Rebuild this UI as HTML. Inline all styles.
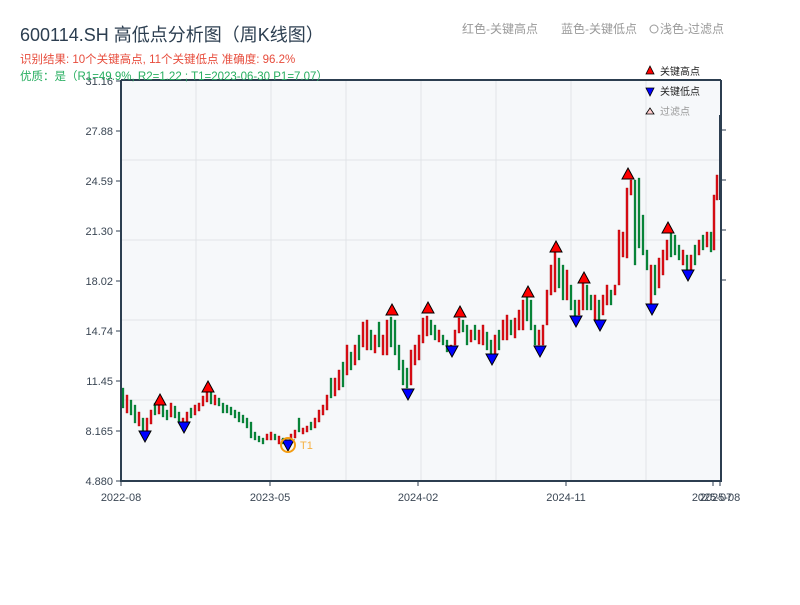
<!DOCTYPE html>
<html><head><meta charset="utf-8"><style>
body{margin:0;background:#fff;width:800px;height:600px;overflow:hidden;font-family:"Liberation Sans","Noto Sans CJK SC",sans-serif}
svg text{font-family:"Liberation Sans","Noto Sans CJK SC",sans-serif}
.r{fill:#e0101a;stroke:#a00;stroke-width:0.4}
.g{fill:#0a8a3a;stroke:#063;stroke-width:0.3}
.H{fill:red;stroke:#000;stroke-width:1}
.L{fill:blue;stroke:#000;stroke-width:1}
</style></head><body>
<svg width="800" height="600" xmlns="http://www.w3.org/2000/svg">
<rect x="121" y="81" width="600" height="400" fill="#f6f8fa"/>
<g stroke="#e1e4e8" stroke-width="1">
<line x1="196" y1="81" x2="196" y2="481"/><line x1="271" y1="81" x2="271" y2="481"/><line x1="346" y1="81" x2="346" y2="481"/><line x1="421" y1="81" x2="421" y2="481"/><line x1="496" y1="81" x2="496" y2="481"/><line x1="571" y1="81" x2="571" y2="481"/><line x1="646" y1="81" x2="646" y2="481"/>
<line x1="121" y1="160" x2="721" y2="160"/><line x1="121" y1="240" x2="721" y2="240"/><line x1="121" y1="320" x2="721" y2="320"/><line x1="121" y1="400" x2="721" y2="400"/>
</g>
<g>
<rect class="g" x="122" y="388" width="2" height="20"/><rect class="r" x="126" y="395" width="2" height="18"/><rect class="g" x="130" y="400" width="2" height="15"/><rect class="g" x="134" y="405" width="2" height="18"/><rect class="r" x="138" y="412" width="2" height="14"/><rect class="g" x="142" y="418" width="2" height="14"/>
<rect class="r" x="146" y="418" width="2" height="16"/><rect class="r" x="150" y="410" width="2" height="14"/><rect class="g" x="154" y="403" width="2" height="12"/><rect class="r" x="158" y="400" width="2" height="14"/>
<rect class="g" x="162" y="405" width="2" height="12"/><rect class="g" x="166" y="410" width="2" height="10"/><rect class="r" x="170" y="403" width="2" height="14"/><rect class="g" x="174" y="406" width="2" height="12"/><rect class="g" x="178" y="412" width="2" height="10"/><rect class="r" x="182" y="418" width="2" height="10"/>
<rect class="r" x="186" y="412" width="2" height="10"/><rect class="g" x="190" y="408" width="2" height="10"/><rect class="r" x="194" y="405" width="2" height="10"/><rect class="r" x="198" y="403" width="2" height="8"/><rect class="r" x="202" y="396" width="2" height="10"/><rect class="r" x="206" y="388" width="2" height="14"/>
<rect class="g" x="210" y="392" width="2" height="12"/><rect class="r" x="214" y="395" width="2" height="10"/><rect class="g" x="218" y="398" width="2" height="8"/><rect class="g" x="222" y="403" width="2" height="10"/><rect class="g" x="226" y="405" width="2" height="8"/><rect class="g" x="230" y="407" width="2" height="8"/><rect class="g" x="234" y="410" width="2" height="8"/><rect class="g" x="238" y="412" width="2" height="10"/><rect class="g" x="242" y="415" width="2" height="8"/><rect class="g" x="246" y="418" width="2" height="10"/><rect class="g" x="250" y="422" width="2" height="16"/><rect class="g" x="254" y="432" width="2" height="8"/><rect class="g" x="258" y="436" width="2" height="6"/><rect class="g" x="262" y="438" width="2" height="6"/>
<rect class="r" x="266" y="434" width="2" height="6"/><rect class="r" x="270" y="432" width="2" height="8"/><rect class="g" x="274" y="434" width="2" height="6"/><rect class="r" x="278" y="436" width="2" height="8"/><rect class="g" x="282" y="438" width="2" height="6"/><rect class="r" x="286" y="440" width="2" height="6"/>
<rect class="r" x="290" y="434" width="2" height="10"/><rect class="r" x="294" y="430" width="2" height="8"/><rect class="g" x="298" y="418" width="2" height="14"/><rect class="r" x="302" y="428" width="2" height="6"/><rect class="r" x="306" y="426" width="2" height="6"/><rect class="g" x="310" y="422" width="2" height="8"/><rect class="r" x="314" y="418" width="2" height="10"/><rect class="r" x="318" y="410" width="2" height="12"/><rect class="r" x="322" y="405" width="2" height="10"/><rect class="r" x="326" y="395" width="2" height="15"/><rect class="g" x="330" y="378" width="2" height="20"/>
<rect class="r" x="334" y="378" width="2" height="18"/><rect class="r" x="338" y="370" width="2" height="20"/><rect class="g" x="342" y="362" width="2" height="25"/><rect class="r" x="346" y="345" width="2" height="30"/><rect class="g" x="350" y="352" width="2" height="18"/><rect class="r" x="354" y="345" width="2" height="20"/><rect class="g" x="358" y="335" width="2" height="25"/><rect class="r" x="362" y="322" width="2" height="25"/><rect class="r" x="366" y="320" width="2" height="30"/><rect class="g" x="370" y="330" width="2" height="20"/><rect class="r" x="374" y="335" width="2" height="18"/><rect class="g" x="378" y="322" width="2" height="25"/><rect class="r" x="382" y="335" width="2" height="20"/><rect class="r" x="386" y="320" width="2" height="35"/><rect class="g" x="390" y="317" width="2" height="30"/>
<rect class="g" x="394" y="320" width="2" height="35"/><rect class="g" x="398" y="345" width="2" height="25"/><rect class="g" x="402" y="360" width="2" height="25"/><rect class="g" x="406" y="368" width="2" height="20"/><rect class="r" x="410" y="350" width="2" height="35"/>
<rect class="r" x="414" y="345" width="2" height="20"/><rect class="r" x="418" y="335" width="2" height="25"/><rect class="r" x="422" y="318" width="2" height="25"/><rect class="r" x="426" y="316" width="2" height="20"/><rect class="g" x="430" y="320" width="2" height="15"/>
<rect class="g" x="434" y="325" width="2" height="15"/><rect class="r" x="438" y="330" width="2" height="12"/><rect class="g" x="442" y="335" width="2" height="10"/><rect class="g" x="446" y="340" width="2" height="12"/><rect class="r" x="450" y="345" width="2" height="8"/>
<rect class="r" x="454" y="330" width="2" height="15"/><rect class="r" x="458" y="318" width="2" height="15"/><rect class="g" x="462" y="320" width="2" height="12"/>
<rect class="g" x="466" y="325" width="2" height="20"/><rect class="r" x="470" y="330" width="2" height="12"/><rect class="g" x="474" y="325" width="2" height="15"/><rect class="r" x="478" y="330" width="2" height="14"/><rect class="r" x="482" y="325" width="2" height="20"/><rect class="g" x="486" y="332" width="2" height="18"/><rect class="g" x="490" y="340" width="2" height="15"/>
<rect class="r" x="494" y="335" width="2" height="20"/><rect class="g" x="498" y="330" width="2" height="20"/><rect class="r" x="502" y="320" width="2" height="20"/><rect class="r" x="506" y="315" width="2" height="25"/><rect class="g" x="510" y="320" width="2" height="15"/><rect class="r" x="514" y="318" width="2" height="20"/><rect class="r" x="518" y="310" width="2" height="20"/><rect class="r" x="522" y="300" width="2" height="30"/><rect class="g" x="526" y="296" width="2" height="25"/>
<rect class="g" x="530" y="300" width="2" height="30"/><rect class="g" x="534" y="325" width="2" height="20"/><rect class="r" x="538" y="330" width="2" height="15"/><rect class="r" x="542" y="325" width="2" height="20"/>
<rect class="r" x="546" y="290" width="2" height="35"/><rect class="r" x="550" y="265" width="2" height="30"/><rect class="r" x="554" y="252" width="2" height="40"/><rect class="g" x="558" y="258" width="2" height="30"/>
<rect class="g" x="562" y="265" width="2" height="35"/><rect class="r" x="566" y="270" width="2" height="30"/><rect class="g" x="570" y="285" width="2" height="25"/><rect class="g" x="574" y="300" width="2" height="20"/>
<rect class="r" x="578" y="300" width="2" height="15"/><rect class="r" x="582" y="280" width="2" height="30"/><rect class="g" x="586" y="285" width="2" height="25"/>
<rect class="g" x="590" y="295" width="2" height="15"/><rect class="r" x="594" y="295" width="2" height="25"/><rect class="g" x="598" y="300" width="2" height="20"/><rect class="r" x="602" y="295" width="2" height="20"/>
<rect class="r" x="606" y="285" width="2" height="20"/><rect class="g" x="610" y="290" width="2" height="15"/><rect class="r" x="614" y="285" width="2" height="10"/><rect class="r" x="618" y="230" width="2" height="55"/><rect class="r" x="622" y="232" width="2" height="25"/><rect class="r" x="626" y="188" width="2" height="70"/><rect class="r" x="630" y="180" width="2" height="15"/>
<rect class="g" x="634" y="180" width="2" height="85"/><rect class="g" x="638" y="178" width="2" height="70"/><rect class="g" x="642" y="215" width="2" height="40"/><rect class="g" x="646" y="250" width="2" height="20"/><rect class="r" x="650" y="265" width="2" height="40"/><rect class="g" x="654" y="265" width="2" height="30"/>
<rect class="r" x="658" y="258" width="2" height="30"/><rect class="r" x="662" y="250" width="2" height="25"/><rect class="r" x="666" y="240" width="2" height="20"/><rect class="g" x="670" y="232" width="2" height="25"/>
<rect class="g" x="674" y="235" width="2" height="20"/><rect class="g" x="678" y="245" width="2" height="15"/><rect class="r" x="682" y="250" width="2" height="15"/><rect class="g" x="686" y="255" width="2" height="15"/>
<rect class="r" x="690" y="255" width="2" height="15"/><rect class="g" x="694" y="245" width="2" height="20"/><rect class="r" x="698" y="240" width="2" height="15"/><rect class="g" x="702" y="235" width="2" height="15"/><rect class="r" x="706" y="232" width="2" height="15"/><rect class="g" x="710" y="232" width="2" height="20"/><rect class="r" x="713" y="195" width="2" height="55"/><rect class="r" x="716" y="175" width="2" height="25"/>
<rect x="719" y="115" width="2" height="85" fill="#2c3e50"/>
</g>
<g stroke="#2c3e50" stroke-width="2" fill="none">
<line x1="121" y1="80" x2="121" y2="482"/><line x1="120" y1="481" x2="722" y2="481"/><line x1="121" y1="80" x2="721" y2="80"/><line x1="721" y1="80" x2="721" y2="482"/>
</g>
<g stroke="#2c3e50" stroke-width="1">
<line x1="116" y1="81" x2="121" y2="81"/><line x1="116" y1="131" x2="121" y2="131"/><line x1="116" y1="181" x2="121" y2="181"/><line x1="116" y1="231" x2="121" y2="231"/><line x1="116" y1="281" x2="121" y2="281"/><line x1="116" y1="331" x2="121" y2="331"/><line x1="116" y1="381" x2="121" y2="381"/><line x1="116" y1="431" x2="121" y2="431"/><line x1="116" y1="481" x2="121" y2="481"/>
<line x1="721" y1="130" x2="726" y2="130"/><line x1="721" y1="180" x2="726" y2="180"/><line x1="721" y1="230" x2="726" y2="230"/><line x1="721" y1="280" x2="726" y2="280"/>
<line x1="121" y1="481" x2="121" y2="486"/><line x1="270" y1="481" x2="270" y2="486"/><line x1="418" y1="481" x2="418" y2="486"/><line x1="566" y1="481" x2="566" y2="486"/><line x1="713" y1="481" x2="713" y2="486"/><line x1="720" y1="481" x2="720" y2="486"/>
</g>
<g fill="#3a4654" font-size="11" text-anchor="end">
<text x="113" y="85">31.16</text><text x="113" y="135">27.88</text><text x="113" y="185">24.59</text><text x="113" y="235">21.30</text><text x="113" y="285">18.02</text><text x="113" y="335">14.74</text><text x="113" y="385">11.45</text><text x="113" y="435">8.165</text><text x="113" y="485">4.880</text>
</g>
<g fill="#3a4654" font-size="11" text-anchor="middle">
<text x="121" y="501">2022-08</text><text x="270" y="501">2023-05</text><text x="418" y="501">2024-02</text><text x="566" y="501">2024-11</text><text x="712" y="501">2025-07</text><text x="720" y="501">2025-08</text>
</g>
<text x="20" y="41" font-size="18" fill="#2c3e50">600114.SH 高低点分析图（周K线图）</text>
<text x="20" y="63" font-size="11.5" fill="#e74c3c">识别结果: 10个关键高点, 11个关键低点   准确度: 96.2%</text>
<text x="20" y="80" font-size="11.5" fill="#27ae60">优质：是（R1=49.9%, R2=1.22 ; T1=2023-06-30 P1=7.07）</text>
<text x="462" y="33" font-size="12" fill="#999">红色-关键高点</text>
<text x="561" y="33" font-size="12" fill="#999">蓝色-关键低点</text>
<circle cx="654" cy="29" r="4" fill="none" stroke="#999"/>
<text x="660" y="33" font-size="12" fill="#999">浅色-过滤点</text>
<polygon points="650,66 654,74 646,74" fill="red" stroke="#000" stroke-width="0.8"/>
<text x="660" y="75" font-size="10" fill="#222">关键高点</text>
<polygon points="646,88 654,88 650,96" fill="blue" stroke="#000" stroke-width="0.8"/>
<text x="660" y="95" font-size="10" fill="#222">关键低点</text>
<polygon points="650,108 654,114 646,114" fill="#fcc" stroke="#000" stroke-width="0.8"/>
<text x="660" y="115" font-size="10" fill="#999">过滤点</text>
<g>
<polygon class="H" points="160,394 166,405 154,405"/><polygon class="H" points="208,381 214,392 202,392"/><polygon class="H" points="392,304 398,315 386,315"/><polygon class="H" points="428,302 434,313 422,313"/><polygon class="H" points="460,306 466,317 454,317"/><polygon class="H" points="528,286 534,297 522,297"/><polygon class="H" points="556,241 562,252 550,252"/><polygon class="H" points="584,272 590,283 578,283"/><polygon class="H" points="628,168 634,179 622,179"/><polygon class="H" points="668,222 674,233 662,233"/>
<polygon class="L" points="139,431 151,431 145,442"/><polygon class="L" points="178,422 190,422 184,433"/><polygon class="L" points="282,440 294,440 288,451"/><polygon class="L" points="402,389 414,389 408,400"/><polygon class="L" points="446,346 458,346 452,357"/><polygon class="L" points="486,354 498,354 492,365"/><polygon class="L" points="534,346 546,346 540,357"/><polygon class="L" points="570,316 582,316 576,327"/><polygon class="L" points="594,320 606,320 600,331"/><polygon class="L" points="646,304 658,304 652,315"/><polygon class="L" points="682,270 694,270 688,281"/>
</g>
<circle cx="288" cy="445" r="7" fill="none" stroke="#f39c12" stroke-width="2"/>
<text x="300" y="449" font-size="11" fill="#f5b041">T1</text>
</svg>
</body></html>
